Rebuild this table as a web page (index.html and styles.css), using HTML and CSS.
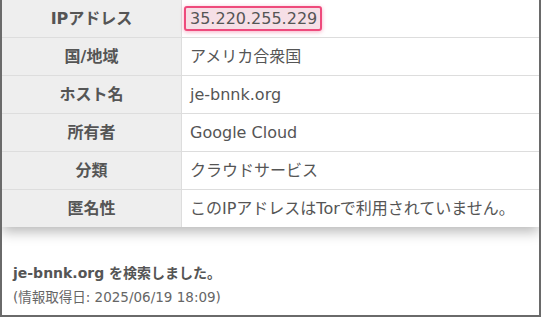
FILE: index.html
```html
<!DOCTYPE html>
<html lang="ja">
<head>
<meta charset="utf-8">
<link rel="stylesheet" href="styles.css">
</head>
<body>
<div class="frame">
  <table class="info">
    <tr><th>IPアドレス</th><td><span class="ip">35.220.255.229</span></td></tr>
    <tr><th>国/地域</th><td>アメリカ合衆国</td></tr>
    <tr><th>ホスト名</th><td>je-bnnk.org</td></tr>
    <tr><th>所有者</th><td>Google Cloud</td></tr>
    <tr><th>分類</th><td>クラウドサービス</td></tr>
    <tr><th>匿名性</th><td>このIPアドレスはTorで利用されていません。</td></tr>
  </table>
  <div class="result">
    <p class="searched">je-bnnk.org を検索しました。</p>
    <p class="date">(情報取得日: 2025/06/19 18:09)</p>
  </div>
</div>
</body>
</html>
```
FILE: styles.css
```css
html, body {
  margin: 0;
  padding: 0;
  background: #fff;
}
body {
  font-family: "DejaVu Sans", "Noto Sans CJK JP", sans-serif;
  color: #555;
}
.frame {
  width: 541px;
  height: 317px;
  box-sizing: border-box;
  border-left: 2px solid #6a6a6a;
  border-right: 2px solid #6a6a6a;
  border-bottom: 2px solid #6a6a6a;
  overflow: hidden;
}
.info {
  width: 100%;
  border-collapse: collapse;
  box-shadow: 0 5px 12px rgba(0, 0, 0, 0.28);
  background: #fff;
}
.info th, .info td {
  height: 37px;
  padding: 0;
  border-top: 1px solid #dddddd;
  font-size: 16px;
  line-height: 20px;
}
.info tr:first-child th, .info tr:first-child td {
  border-top: none;
  height: 37px;
}
.info th {
  width: 179px;
  background: #eeeeee;
  font-weight: bold;
  color: #555;
  text-align: center;
  border-right: 1px solid #dddddd;
}
.info td {
  padding-left: 8px;
  color: #555;
  text-align: left;
}
.ip {
  display: inline-block;
  vertical-align: middle;
  margin-left: -6px;
  padding: 0 3px 0 4px;
  line-height: 21px;
  background: #f6dfe6;
  border: 2px solid #ee4a7c;
  border-radius: 3px;
  box-shadow: 0 1px 4px rgba(238, 74, 124, 0.45);
}
.result {
  padding: 36px 0 0 11px;
}
.result p {
  margin: 0;
}
.searched {
  font-size: 14px;
  font-weight: bold;
  line-height: 20px;
  color: #555;
}
.date {
  font-size: 13.5px;
  line-height: 18px;
  margin-top: 5px !important;
  color: #666;
}
```
